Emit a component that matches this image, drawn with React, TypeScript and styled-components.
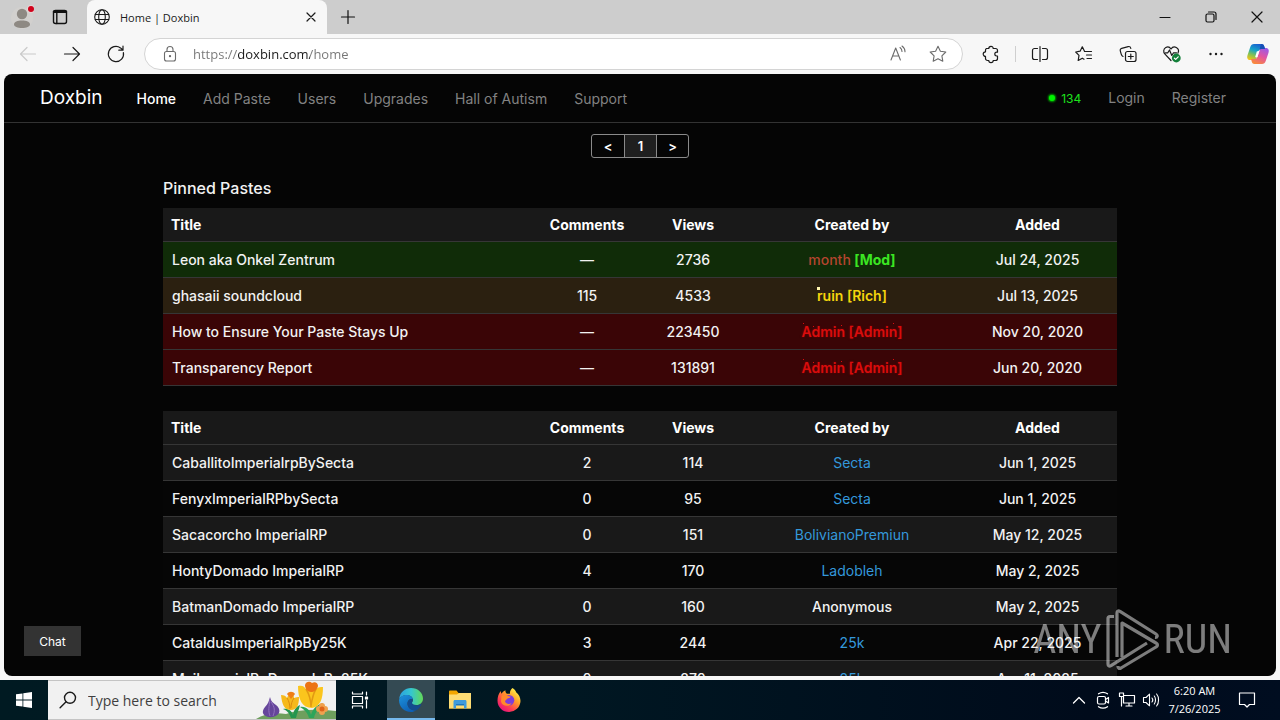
import React from "react";
import styled, { createGlobalStyle, css } from "styled-components";

const systemFont = `"Open Sans", "Noto Sans", sans-serif`;
const siteFont = `Inter, "Liberation Sans", sans-serif`;

const GlobalStyle = createGlobalStyle`
  * { box-sizing: border-box; }
  body { margin: 0; background: #f7f7f7; font-family: ${systemFont}; overflow: hidden; }
  button { border: 0; margin: 0; padding: 0; background: none; font: inherit; color: inherit; cursor: pointer; }
  a { color: inherit; text-decoration: none; }
  input { border: 0; outline: 0; margin: 0; padding: 0; background: none; font: inherit; }
  svg { display: block; flex: none; }
`;

const Desktop = styled.div`
  height: 100vh;
  display: flex;
  flex-direction: column;
`;

/* ---------- Browser chrome ---------- */

const TabStrip = styled.header`
  display: flex;
  align-items: stretch;
  height: 34px;
  flex: none;
  padding-right: 0;
  background: #cdcdcd;
`;

const StripButton = styled.button<{ $width: number }>`
  width: ${(p) => p.$width}px;
  display: flex;
  align-items: center;
  justify-content: center;
  color: #111;
`;

const Tab = styled.div`
  width: 240px;
  display: flex;
  align-items: center;
  gap: 10px;
  margin-left: 11px;
  padding: 0 8px 0 7px;
  background: #f7f7f7;
  border-radius: 8px 8px 0 0;
  color: #1b1b1b;
  font-size: 11px;
`;

const TabTitle = styled.span`
  flex: 1;
`;

const TabClose = styled.button`
  width: 16px;
  height: 16px;
  display: flex;
  align-items: center;
  justify-content: center;
`;

const Spacer = styled.div`
  flex: 1;
`;

const Toolbar = styled.div`
  display: flex;
  align-items: center;
  height: 40px;
  flex: none;
  padding: 0 2px 0 6px;
  background: #f7f7f7;
`;

const ToolButton = styled.button<{ $faded?: boolean; $narrow?: boolean }>`
  width: ${(p) => (p.$narrow ? 40 : 44)}px;
  height: 32px;
  flex: none;
  display: flex;
  align-items: center;
  justify-content: center;
  color: ${(p) => (p.$faded ? "#cacaca" : "#1b1b1b")};
`;

const AddressBar = styled.div`
  flex: 1;
  height: 32px;
  margin: 0 6px;
  display: flex;
  align-items: center;
  padding: 0 4px 0 15px;
  background: #fff;
  border: 1px solid #d4d4d4;
  border-radius: 16px;
  color: #6b6b6b;
`;

const AddressInput = styled.input`
  flex: 1;
  min-width: 0;
  height: 24px;
  margin-left: 13px;
  font-size: 13px;
  color: transparent;
  background: linear-gradient(90deg, #767676 0 45px, #1b1b1b 45px 117px, #767676 117px);
  background-clip: text;
  -webkit-background-clip: text;
`;

const AddressButton = styled.button`
  width: 40px;
  height: 28px;
  display: flex;
  align-items: center;
  justify-content: center;
`;

const ToolDivider = styled.div`
  width: 1px;
  height: 16px;
  margin: 0 2px;
  background: #cfcfcf;
`;

/* ---------- Site ---------- */

const Viewport = styled.div`
  position: relative;
  flex: 1;
  min-height: 0;
  overflow: hidden;
  margin: 0 4px 4px;
  border-radius: 8px;
  background: #050505;
  color: #f2f2f2;
  font-family: ${siteFont};
`;

const SiteNav = styled.nav`
  height: 49px;
  display: flex;
  align-items: center;
  padding: 0 50px 0 36px;
  border-bottom: 1px solid #333;
  font-size: 14px;
`;

const Brand = styled.a`
  margin-right: 34px;
  font-size: 19px;
  line-height: 24px;
  color: #fff;
`;

const NavLinks = styled.div<{ $lowered?: boolean }>`
  display: flex;
  gap: 27px;
  padding-top: ${(p) => (p.$lowered ? 2 : 0)}px;
`;

const NavLink = styled.a<{ $active?: boolean }>`
  line-height: 20px;
  color: ${(p) => (p.$active ? "#fff" : "#828282")};
  font-weight: ${(p) => (p.$active ? 500 : 400)};
`;

const Online = styled.span`
  display: flex;
  align-items: center;
  gap: 6px;
  font-size: 12px;
  color: #1de21d;
`;

const OnlineDot = styled.i`
  width: 6px;
  height: 6px;
  border-radius: 50%;
  background: #00f400;
  box-shadow: 0 0 2px 1px #00a000;
`;

const Content = styled.main`
  width: 75%;
  margin: 0 auto;
`;

const Pager = styled.div`
  display: flex;
  width: max-content;
  margin: 11px auto 0;
  border: 1px solid #8a8a8a;
  border-radius: 3px;
  overflow: hidden;
`;

const PageButton = styled.button<{ $current?: boolean }>`
  width: 32px;
  height: 22px;
  font-size: 13px;
  font-weight: 600;
  color: #fff;
  background: ${(p) => (p.$current ? "#1f1f1f" : "transparent")};
  & + & { border-left: 1px solid #8a8a8a; }
`;

const SectionTitle = styled.h2`
  margin: 18px 0 8px;
  font-size: 16px;
  line-height: 24px;
  font-weight: 500;
`;

const PasteTable = styled.table`
  width: 100%;
  table-layout: fixed;
  border-collapse: separate;
  border-spacing: 0;
  margin-bottom: 25px;
  font-size: 14px;
  line-height: 20px;
  font-weight: 500;
`;

const HeadCell = styled.th<{ $share?: string }>`
  width: ${(p) => p.$share ?? "auto"};
  height: 34px;
  padding: 0 8px;
  background: #191919;
  border-bottom: 1px solid #363636;
  font-weight: 700;
  color: #fff;
  text-align: center;
  &:first-child { text-align: left; }
`;

type Tone = "mod" | "rich" | "admin" | "odd" | "even";
const tones: Record<Tone, string> = {
  mod: "#102c08",
  rich: "#2b2010",
  admin: "#3a0506",
  odd: "#191919",
  even: "#060606",
};

const Row = styled.tr<{ $tone: Tone }>`
  background: ${(p) => tones[p.$tone]};
`;

const Cell = styled.td`
  height: 36px;
  padding: 0 9px;
  border-bottom: 1px solid #363636;
  text-align: center;
  white-space: nowrap;
  &:first-child { text-align: left; }
`;

type Rank = "mod" | "rich" | "admin" | "user" | "none";
const rankStyles = {
  mod: css`color: #b5452f;`,
  rich: css`color: #f4d50c; font-weight: 600;`,
  admin: css`color: #d90d0d; font-weight: 600; text-shadow: 0 0 2px #700;`,
  user: css`color: #3498db; font-weight: 400;`,
  none: css`color: #f2f2f2;`,
};

const Author = styled.span<{ $rank: Rank }>`
  position: relative;
  ${(p) => rankStyles[p.$rank]}
`;

const ModTag = styled.b`
  color: #3be622;
  font-weight: 700;
`;

const Sparkle = styled.i<{ $x: number; $y: number; $bright?: boolean }>`
  position: absolute;
  left: ${(p) => p.$x}px;
  top: ${(p) => p.$y}px;
  width: ${(p) => (p.$bright ? 3 : 1)}px;
  height: ${(p) => (p.$bright ? 3 : 1)}px;
  background: ${(p) => (p.$bright ? "#fff6b0" : "currentColor")};
`;

const ChatButton = styled.button`
  position: absolute;
  left: 20px;
  bottom: 20px;
  width: 57px;
  height: 30px;
  background: #333;
  color: #fff;
  font-size: 12px;
`;

const Watermark = styled.div`
  position: absolute;
  right: 44px;
  bottom: 2px;
  height: 68px;
  display: flex;
  align-items: center;
  gap: 3px;
  color: #fff;
  opacity: 0.48;
  font-family: "Liberation Sans Narrow", "Roboto Condensed", "Liberation Sans", sans-serif;
  font-size: 40px;
  line-height: 68px;
  pointer-events: none;
`;

/* ---------- Taskbar ---------- */

const Taskbar = styled.footer`
  height: 40px;
  flex: none;
  display: flex;
  align-items: stretch;
  padding-right: 12px;
  background: linear-gradient(90deg, #001a22, #001722 45%, #000b1b 85%, #000d20);
  color: #fff;
`;

const TaskButton = styled.button<{ $active?: boolean }>`
  width: 48px;
  margin-right: 1px;
  display: flex;
  align-items: center;
  justify-content: center;
  background: ${(p) => (p.$active ? "#344a53" : "none")};
  border-bottom: 2px solid ${(p) => (p.$active ? "#76b9ed" : "transparent")};
  border-top: 2px solid transparent;
`;

const TaskButtons = styled.div`
  display: flex;
  margin-left: 2px;
`;

const StartButton = styled.button`
  width: 48px;
  display: flex;
  align-items: center;
  justify-content: center;
`;

const SearchBox = styled.label`
  width: 288px;
  display: flex;
  align-items: center;
  padding-left: 11px;
  background: #f1f1f1;
  border-top: 1px solid #c4c4c4;
  border-bottom: 1px solid #c4c4c4;
  color: #1b1b1b;
`;

const SearchInput = styled.input`
  flex: 1;
  min-width: 0;
  margin-left: 11px;
  font-size: 14px;
  &::placeholder { color: #3f3f3f; opacity: 1; }
`;

const TrayButton = styled.button<{ $width: number }>`
  width: ${(p) => p.$width}px;
  display: flex;
  align-items: center;
  justify-content: center;
`;

const Clock = styled.button`
  width: 63px;
  font-size: 11px;
  line-height: 18px;
  text-align: center;
`;

/* ---------- Icons ---------- */

type IconProps = { size?: number; width?: number; children: React.ReactNode };
const Line = ({ size = 20, width = 1.1, children }: IconProps) => (
  <svg width={size} height={size} viewBox={`0 0 ${size} ${size}`} fill="none" stroke="currentColor"
    strokeWidth={width} strokeLinecap="round" strokeLinejoin="round" aria-hidden="true">
    {children}
  </svg>
);

const ProfileIcon = () => (
  <svg width="24" height="28" viewBox="0 0 24 28" aria-hidden="true">
    <circle cx="12" cy="15" r="11" fill="#d2d0ce" />
    <circle cx="12" cy="11" r="5.2" fill="#8e8983" />
    <path d="M4 21.5C4 19 7.5 17.6 12 17.6s8 1.400 8 3.900c0 2-3.500 3.500-8 3.500s-8-1.500-8-3.500Z" fill="#8e8983" />
    <circle cx="21" cy="6" r="4" fill="#e4d5d5" />
    <circle cx="21" cy="6" r="3" fill="#d0021b" />
  </svg>
);

const WorkspacesIcon = () => (
  <Line width={1.400}>
    <rect x="3.500" y="3.500" width="13" height="13" rx="2" />
    <path d="M4 4.800h12" strokeWidth="2.400" />
    <path d="M6.800 4v12.500" />
  </Line>
);

const GlobeIcon = () => (
  <Line size={16} width={1.100}>
    <circle cx="8" cy="8" r="7.300" />
    <ellipse cx="8" cy="8" rx="3.300" ry="7.300" />
    <path d="M1.300 5.500h13.400M1.300 10.500h13.400" />
  </Line>
);

const CloseIcon = () => (
  <Line size={16} width={1.200}><path d="m4 4 8 8M12 4l-8 8" /></Line>
);
const PlusIcon = () => (
  <Line width={1.200}><path d="M10 3.500v13M3.500 10h13" /></Line>
);
const MinimizeIcon = () => (
  <Line width={1.100}><path d="M5 10.500h10" /></Line>
);
const RestoreIcon = () => (
  <Line width={1.200}>
    <rect x="5" y="7" width="8" height="8" rx="1.500" />
    <path d="M7.500 5H13a2 2 0 0 1 2 2v5.500" />
  </Line>
);
const WindowCloseIcon = () => (
  <Line width={1.200}><path d="m5 5 10 10M15 5 5 15" /></Line>
);
const BackIcon = () => (
  <Line width={1.200}><path d="M17.500 10h-15M9 3.500 2.500 10 9 16.500" /></Line>
);
const ForwardIcon = () => (
  <Line width={1.200}><path d="M2.500 10h15M11 3.500l6.500 6.500L11 16.500" /></Line>
);
const ReloadIcon = () => (
  <Line width={1.200}><path d="M17.400 8.500A7.600 7.600 0 1 1 14.500 3.900L17 6M17 2v4.200h-4.200" /></Line>
);
const LockIcon = () => (
  <Line width={1.100}>
    <rect x="4.500" y="7.500" width="11" height="9.500" rx="2" />
    <path d="M7 7.500V5.500a3 3 0 0 1 6 0v2" />
    <circle cx="10" cy="12.200" r="0.600" fill="currentColor" />
  </Line>
);
const ReadAloudIcon = () => (
  <Line width={1.100}>
    <path d="m3 16 4.700-12L12.400 16M4.500 12h6.300M12 3.500c1.300 1 2 2.300 2 4M14 2c2 1.400 3 3.300 3 5.800" />
  </Line>
);
const StarIcon = () => (
  <Line width={1.100}>
    <path d="m10 2.300 2.400 4.900 5.400.8-3.900 3.800.9 5.400-4.800-2.500-4.800 2.500.9-5.400L2.200 8l5.400-.8L10 2.300Z" />
  </Line>
);
const PuzzleIcon = () => (
  <Line width={1.200}>
    <path d="M5.500 4.500h2.300a2.200 2.200 0 0 1 4.400 0h2.300a2 2 0 0 1 2 2v1.700h-.8a1.900 1.900 0 0 0 0 3.800h.8v2.500a2 2 0 0 1-2 2h-2.300a2.200 2.200 0 0 1-4.400 0H6.500a2 2 0 0 1-2-2V12.400a2.300 2.300 0 0 1 0-4.600V6.500a2 2 0 0 1 1-2Z" />
  </Line>
);
const SplitIcon = () => (
  <Line width={1.200}>
    <path d="M7.500 4.500H4.500a2 2 0 0 0-2 2v7a2 2 0 0 0 2 2h3M12.500 4.500h3a2 2 0 0 1 2 2v7a2 2 0 0 1-2 2h-3M10 2.500v15" />
  </Line>
);
const FavoritesIcon = () => (
  <Line width={1.200}>
    <path d="M10.500 7.200 8.300 2.800 6.100 7.200l-4.400.8 3.300 3.300-.8 5.200 4.100-2.300 1.700 1M10.500 7.500H17.500M12.500 11H17.500M13 14.500h4.500" />
  </Line>
);
const CollectionsIcon = () => (
  <Line width={1.200}>
    <rect x="7.500" y="7.500" width="10.500" height="10" rx="2" />
    <path d="M12.800 10v5M10.300 12.500h5M5 12.500c-1.200-.3-1.500-1.200-1.800-2.300l-.9-3.300c-.4-1.300.3-2.200 1.400-2.500l6.500-1.800c1.200-.3 2.200.2 2.600 1.700" />
  </Line>
);
const HeartIcon = () => (
  <Line width={1.200}>
    <path d="M9 16.500 3 10.200C1 8 1.400 4.800 3.800 3.500c2-1 4-.3 5.200 1.500 1.200-1.800 3.300-2.500 5.300-1.500 2.200 1.200 2.600 3.700 1.600 5.700M3.500 8.800h2.300L7.500 6l2.300 5.500 1.700-2.700h3" />
    <circle cx="14.300" cy="14" r="4.400" fill="#13803a" stroke="none" />
    <path d="m12.400 14.200 1.300 1.200 2.500-2.600" stroke="#fff" />
  </Line>
);
const DotsIcon = () => (
  <Line><g fill="currentColor" stroke="none"><circle cx="4.500" cy="10" r="1.200" /><circle cx="10" cy="10" r="1.200" /><circle cx="15.500" cy="10" r="1.200" /></g></Line>
);

const CopilotIcon = () => (
  <svg width="24" height="22" viewBox="0 0 24 22" aria-hidden="true">
    <defs>
      <linearGradient id="cpA" x1="0.600" y1="0" x2="0.200" y2="1">
        <stop offset="0" stopColor="#1a5fd0" /><stop offset="0.400" stopColor="#15a5c8" /><stop offset="0.700" stopColor="#86c252" /><stop offset="1" stopColor="#f4c318" />
      </linearGradient>
      <linearGradient id="cpB" x1="0.800" y1="0" x2="0.300" y2="1">
        <stop offset="0" stopColor="#9a5ae8" /><stop offset="0.500" stopColor="#e355a0" /><stop offset="1" stopColor="#f98a3c" />
      </linearGradient>
    </defs>
    <path d="M8 1h7.500c1.500 0 2.200.8 2.700 2.200l.9 2.800h-3.600c-1.700 0-2.600 1-3.100 2.500l-1.900 6c-.6 1.800-1.500 2.500-3.200 2.500H4.200C1.500 17 .7 14.800 1.500 12.200l2.700-8C5 2 6 1 8 1Z" fill="url(#cpA)" />
    <path d="M16 21H8.500c-1.500 0-2.200-.8-2.700-2.200L5 16h3.500c1.700 0 2.600-1 3.100-2.500l1.900-6C14.100 5.700 15 5 16.700 5h3.100c2.700 0 3.500 2.200 2.700 4.800l-2.700 8C19 20 18 21 16 21Z" fill="url(#cpB)" />
    <path d="M15 1h.5c1.500 0 2.200.8 2.700 2.200l.9 2.800h-3.600c-.8 0-1.500.3-2 .8Z" fill="#174fb5" />
    <path d="m10.800 8.500 2.600-.8-2 6.200-2.300.3Z" fill="#fff" />
  </svg>
);

const PlayMark = () => (
  <svg width="56" height="64" viewBox="0 0 56 64" fill="none" stroke="currentColor" strokeWidth="3.200" strokeLinejoin="round" aria-hidden="true">
    <path d="M9 8.500H5a2 2 0 0 0-2 2V56c0 2 1.200 2.700 3 1.700L42 35" />
    <path d="M12 49V5c0-2 1.200-2.700 3-1.700L51 26c2 1.300 1.500 3.500-1 3.300" />
    <path d="M17 49V15l34 20c2 1 2 3 0 4L16 60c-2 1-3 0-3-2" />
  </svg>
);

const WindowsIcon = () => (
  <svg width="16" height="16" viewBox="0 0 16 16" fill="#fff" aria-hidden="true">
    <path d="M0 2.300 6.500 1.400v6.200H0ZM7.300 1.300 16 0v7.600H7.300ZM0 8.400h6.500v6.200L0 13.700ZM7.300 8.400H16V16l-8.700-1.200Z" />
  </svg>
);
const SearchIcon = () => (
  <Line size={18} width={1.400}><circle cx="11" cy="6.800" r="5.500" /><path d="m7.100 10.700-6 6" /></Line>
);

const FlowersIcon = () => (
  <svg width="80" height="38" viewBox="0 0 80 38" aria-hidden="true">
    <path d="M0 38c8-5 18-7 30-5 14-5 32-5 50-3v8Z" fill="#6e9f5d" />
    <path d="M14 16c1 4 2 5 6 8 5 4 5 10-3 12-9 1-13-4-8-10 3-3 4-6 5-10Z" fill="#65459a" />
    <path d="M14 18c-1 8-2 12 0 17M15 21c4 5 4 9 2 14" stroke="#9071bd" fill="none" />
    <path d="M35 37c-2-6-5-8-8-9 5-1 9 2 10 6 1-6 4-9 7-10-1 5-3 8-4 13Z" fill="#24964f" />
    <path d="M53 37c-2-7-6-9-9-11 6-1 10 3 11 8 2-8 8-11 12-12-2 5-8 8-9 15Z" fill="#2ca55a" />
    <path d="M25 14c3 0 5 1 6 3 1-3 3-5 5-5 1 1 2 3 2 5 2-1 4-1 5-1 0 8-2 13-8 13-7 0-9-6-10-15Z" fill="#f6b91b" />
    <path d="M31 17c2 3 3 7 3 11M38 17c-2 3-3 6-3 10" stroke="#dc8b0e" fill="none" />
    <path d="M31 13c2-3 6-3 8 0l-4 5Z" fill="#ef7e15" />
    <path d="M42 5c4-1 6 0 8 3 1-4 3-6 5-6 3 0 5 3 5 6 2-2 5-2 7-2 0 12-3 20-11 21-10 0-14-9-14-22Z" fill="#fbc51d" />
    <path d="M50 8c3 5 5 11 5 18M60 8c-3 5-4 10-5 17" stroke="#e29a12" fill="none" strokeWidth="1.500" />
    <path d="M49 4c1-4 5-4 7-2 3-2 6 0 6 3-1 4-4 6-7 6s-6-3-6-7Z" fill="#ec7414" />
    <g fill="#f0a14f"><circle cx="63" cy="28" r="3" /><circle cx="69" cy="28" r="3" /><circle cx="66" cy="25" r="3" /><circle cx="66" cy="31" r="3" /></g>
    <circle cx="66" cy="28" r="2.500" fill="#e0641a" />
  </svg>
);

const TaskViewIcon = () => (
  <Line size={18} width={1.200}>
    <rect x="1.500" y="5.500" width="10" height="7" />
    <path d="M1.500 1v2h10V1M1.500 17v-2h10v2M15.500 1v3M15.500 9.500V17" />
    <path d="M14.500 6h2v2h-2z" fill="currentColor" />
  </Line>
);

const EdgeIcon = () => (
  <svg width="26" height="26" viewBox="0 0 26 26" aria-hidden="true">
    <defs>
      <linearGradient id="edT" x1="0" y1="0.500" x2="1" y2="0.500">
        <stop offset="0" stopColor="#2aa0e0" /><stop offset="0.500" stopColor="#35c6d0" /><stop offset="1" stopColor="#63d957" />
      </linearGradient>
      <linearGradient id="edB" x1="0" y1="0" x2="0.600" y2="1">
        <stop offset="0" stopColor="#1d92dc" /><stop offset="1" stopColor="#0e5fb4" />
      </linearGradient>
    </defs>
    <path d="M1.200 12C2 5 7 1 13 1c7 0 12 5 12 10.500 0 4-3 6.500-6.500 6.500-3 0-4.500-1-4.500-2 0-.8 1-1.200 1-3C15 10.500 12.500 8 9 8c-4 0-6.500 2-7.800 4Z" fill="url(#edT)" />
    <path d="M1 13C2 9.500 5 8 9 8c3.500 0 6 2.500 6 4.800 0-1.300-5.500-1.300-5.500 4 0 4.500 4.500 7 8.500 6.700-1.500.9-3 1.500-5 1.500C6 25 1 19.800 1 13Z" fill="url(#edB)" />
    <path d="M9.500 16.800c0-3.600 2.500-4.800 4.500-4.800 1 .5.500 2 0 3-.5 1.500 1 3.400 4.500 3.400 2.300 0 4-.8 5.200-1.900-1 3-3 5.500-5.700 7-4 .3-8.500-2.200-8.500-6.700Z" fill="#134b8e" />
  </svg>
);

const ExplorerIcon = () => (
  <svg width="22" height="20" viewBox="0 0 22 20" aria-hidden="true">
    <path d="M0 1.500C0 1 .5.500 1 .500h6.500L9.500 3H21c.6 0 1 .4 1 1v14.500H0Z" fill="#f2a600" />
    <path d="M0 4.500h8l2-1.500h12v15.500H0Z" fill="#fddc74" />
    <path d="M4.500 18.500v-7c0-.8.500-1.500 1.500-1.500h10c1 0 1.500.700 1.500 1.500v7H15V14H7v4.500Z" fill="#3e9bdc" />
    <path d="M7 14h8v1.500H7Z" fill="#1e77bd" />
  </svg>
);

const FirefoxIcon = () => (
  <svg width="24" height="24" viewBox="0 0 24 24" aria-hidden="true">
    <defs>
      <linearGradient id="ffA" x1="0.850" y1="0.100" x2="0.200" y2="0.950">
        <stop offset="0" stopColor="#fff04a" /><stop offset="0.350" stopColor="#ffa028" /><stop offset="0.700" stopColor="#ff4050" /><stop offset="1" stopColor="#e5127c" />
      </linearGradient>
    </defs>
    <path d="M15.500 0c2 1.200 3.200 2.600 3.800 4.600 2.400 1.800 4.200 5 4.200 8.400A11.400 11.400 0 0 1 12 24C5.600 24 .500 19 .500 12.700c0-3.800 1.200-7.200 3.300-9.700 0 1.200.2 2 .8 2.700C5.300 4.500 6.500 3 8.500 2.200c-.3 1.500.2 2.800 1.500 3.600h3C12.600 3.400 13.800 1.500 15.500 0Z" fill="url(#ffA)" />
    <circle cx="12" cy="12.300" r="5.300" fill="#7d3ddb" />
    <path d="M4.500 8c2-1.500 4.700-1.600 6.500 0l2.500.5c0 1.300-1.500 1.800-3 2-.8 1-2 1.300-2.500 3 .8 2.500 4.500 3.200 6.500 1.500-1 4-9.500 4-10.500-1.500Z" fill="#ff8a2b" />
  </svg>
);

const ChevronUpIcon = () => (
  <Line size={16} width={1.300}><path d="m2.500 11 5.500-5.500 5.500 5.500" /></Line>
);
const MeetIcon = () => (
  <Line size={18} width={1.200}>
    <rect x="3.500" y="5.500" width="8" height="7.500" rx="1.500" />
    <path d="m11.500 8.500 3-2v5.500l-3-2M4.500 2.800c3-2 6-2 9 0M4.500 15.700c3 2 6 2 9 0" />
  </Line>
);
const NetworkIcon = () => (
  <Line size={18} width={1.200}>
    <path d="M5.500 4.500h11v7.500h-11zM11 12v3M8 15h6M1.500 2h4v3.500h-4zM3.500 5.500V15" />
  </Line>
);
const VolumeIcon = () => (
  <Line size={18} width={1.100}>
    <path d="M1.500 6.500H4l3.500-3.300v11.600L4 11.500H1.500ZM10 7c.8 1 .8 3 0 4M12.300 5c1.600 2 1.600 6 0 8M14.600 3c2.600 3 2.600 9 0 12" />
  </Line>
);
const NotificationIcon = () => (
  <Line size={18} width={1.200}><path d="M1.500 2h15v11.500h-5L9 16l-2.500-2.500h-5Z" /></Line>
);

/* ---------- Data ---------- */

type Paste = { title: string; comments: string; views: string; author: string; rank: Rank; added: string; tone: Tone };

const pinned: Paste[] = [
  { title: "Leon aka Onkel Zentrum", comments: "—", views: "2736", author: "month", rank: "mod", added: "Jul 24, 2025", tone: "mod" },
  { title: "ghasaii soundcloud", comments: "115", views: "4533", author: "ruin [Rich]", rank: "rich", added: "Jul 13, 2025", tone: "rich" },
  { title: "How to Ensure Your Paste Stays Up", comments: "—", views: "223450", author: "Admin [Admin]", rank: "admin", added: "Nov 20, 2020", tone: "admin" },
  { title: "Transparency Report", comments: "—", views: "131891", author: "Admin [Admin]", rank: "admin", added: "Jun 20, 2020", tone: "admin" },
];

const recent: Paste[] = [
  { title: "CaballitoImperialrpBySecta", comments: "2", views: "114", author: "Secta", rank: "user", added: "Jun 1, 2025", tone: "odd" },
  { title: "FenyxImperialRPbySecta", comments: "0", views: "95", author: "Secta", rank: "user", added: "Jun 1, 2025", tone: "even" },
  { title: "Sacacorcho ImperialRP", comments: "0", views: "151", author: "BolivianoPremiun", rank: "user", added: "May 12, 2025", tone: "odd" },
  { title: "HontyDomado ImperialRP", comments: "4", views: "170", author: "Ladobleh", rank: "user", added: "May 2, 2025", tone: "even" },
  { title: "BatmanDomado ImperialRP", comments: "0", views: "160", author: "Anonymous", rank: "none", added: "May 2, 2025", tone: "odd" },
  { title: "CataldusImperialRpBy25K", comments: "3", views: "244", author: "25k", rank: "user", added: "Apr 22, 2025", tone: "even" },
  { title: "MaiImperialRpDomadoBy25K", comments: "0", views: "270", author: "25k", rank: "user", added: "Apr 11, 2025", tone: "odd" },
];

const AuthorName = ({ paste }: { paste: Paste }) => (
  <Author $rank={paste.rank}>
    {paste.rank === "none" ? paste.author : <a href="#user">{paste.author}</a>}
    {paste.rank === "mod" && <ModTag> [Mod]</ModTag>}
    {paste.rank === "rich" && <Sparkle $x={0} $y={0} $bright />}
    {paste.rank === "admin" && (
      <>
        <Sparkle $x={2} $y={0} />
        <Sparkle $x={12} $y={3} />
        <Sparkle $x={40} $y={2} />
        <Sparkle $x={92} $y={0} />
      </>
    )}
  </Author>
);

const Pastes = ({ rows }: { rows: Paste[] }) => (
  <PasteTable>
    <thead>
      <tr>
        <HeadCell scope="col">Title</HeadCell>
        <HeadCell scope="col" $share="11.11%">Comments</HeadCell>
        <HeadCell scope="col" $share="11.11%">Views</HeadCell>
        <HeadCell scope="col" $share="22.22%">Created by</HeadCell>
        <HeadCell scope="col" $share="16.67%">Added</HeadCell>
      </tr>
    </thead>
    <tbody>
      {rows.map((p) => (
        <Row key={p.title} $tone={p.tone}>
          <Cell><a href="#paste">{p.title}</a></Cell>
          <Cell>{p.comments}</Cell>
          <Cell>{p.views}</Cell>
          <Cell><AuthorName paste={p} /></Cell>
          <Cell>{p.added}</Cell>
        </Row>
      ))}
    </tbody>
  </PasteTable>
);

export default function App() {
  return (
    <Desktop>
      <GlobalStyle />
      <TabStrip>
        <StripButton $width={44} aria-label="Profile"><ProfileIcon /></StripButton>
        <StripButton $width={32} aria-label="Tab actions"><WorkspacesIcon /></StripButton>
        <Tab>
          <GlobeIcon />
          <TabTitle>Home | Doxbin</TabTitle>
          <TabClose aria-label="Close tab"><CloseIcon /></TabClose>
        </Tab>
        <StripButton $width={42} aria-label="New tab"><PlusIcon /></StripButton>
        <Spacer />
        <StripButton $width={46} aria-label="Minimize"><MinimizeIcon /></StripButton>
        <StripButton $width={46} aria-label="Restore"><RestoreIcon /></StripButton>
        <StripButton $width={46} aria-label="Close"><WindowCloseIcon /></StripButton>
      </TabStrip>
      <Toolbar>
        <ToolButton $faded aria-label="Back"><BackIcon /></ToolButton>
        <ToolButton aria-label="Forward"><ForwardIcon /></ToolButton>
        <ToolButton aria-label="Reload"><ReloadIcon /></ToolButton>
        <AddressBar>
          <LockIcon />
          <AddressInput aria-label="Address" defaultValue="https://doxbin.com/home" />
          <AddressButton aria-label="Read aloud"><ReadAloudIcon /></AddressButton>
          <AddressButton aria-label="Add to favorites"><StarIcon /></AddressButton>
        </AddressBar>
        <ToolButton aria-label="Extensions"><PuzzleIcon /></ToolButton>
        <ToolDivider />
        <ToolButton aria-label="Split screen"><SplitIcon /></ToolButton>
        <ToolButton aria-label="Favorites"><FavoritesIcon /></ToolButton>
        <ToolButton aria-label="Collections"><CollectionsIcon /></ToolButton>
        <ToolButton aria-label="Browser essentials"><HeartIcon /></ToolButton>
        <ToolButton aria-label="Settings and more"><DotsIcon /></ToolButton>
        <ToolButton $narrow aria-label="Copilot"><CopilotIcon /></ToolButton>
      </Toolbar>

      <Viewport>
        <SiteNav>
          <Brand href="#home">Doxbin</Brand>
          <NavLinks $lowered>
            <NavLink href="#home" $active>Home</NavLink>
            <NavLink href="#add">Add Paste</NavLink>
            <NavLink href="#users">Users</NavLink>
            <NavLink href="#upgrades">Upgrades</NavLink>
            <NavLink href="#hall">Hall of Autism</NavLink>
            <NavLink href="#support">Support</NavLink>
          </NavLinks>
          <Spacer />
          <NavLinks>
            <Online><OnlineDot />134</Online>
            <NavLink href="#login">Login</NavLink>
            <NavLink href="#register">Register</NavLink>
          </NavLinks>
        </SiteNav>
        <Content>
          <Pager>
            <PageButton>&lt;</PageButton>
            <PageButton $current>1</PageButton>
            <PageButton>&gt;</PageButton>
          </Pager>
          <SectionTitle>Pinned Pastes</SectionTitle>
          <Pastes rows={pinned} />
          <Pastes rows={recent} />
        </Content>
        <ChatButton>Chat</ChatButton>
        <Watermark><span>ANY</span><PlayMark /><span>RUN</span></Watermark>
      </Viewport>

      <Taskbar>
        <StartButton aria-label="Start"><WindowsIcon /></StartButton>
        <SearchBox>
          <SearchIcon />
          <SearchInput placeholder="Type here to search" aria-label="Type here to search" />
          <FlowersIcon />
        </SearchBox>
        <TaskButton aria-label="Task view"><TaskViewIcon /></TaskButton>
        <TaskButtons>
          <TaskButton $active aria-label="Microsoft Edge"><EdgeIcon /></TaskButton>
          <TaskButton aria-label="File Explorer"><ExplorerIcon /></TaskButton>
          <TaskButton aria-label="Firefox"><FirefoxIcon /></TaskButton>
        </TaskButtons>
        <Spacer />
        <TrayButton $width={24} aria-label="Show hidden icons"><ChevronUpIcon /></TrayButton>
        <TrayButton $width={24} aria-label="Meet Now"><MeetIcon /></TrayButton>
        <TrayButton $width={24} aria-label="Network"><NetworkIcon /></TrayButton>
        <TrayButton $width={24} aria-label="Volume"><VolumeIcon /></TrayButton>
        <Clock>6:20 AM<br />7/26/2025</Clock>
        <TrayButton $width={42} aria-label="Notifications"><NotificationIcon /></TrayButton>
      </Taskbar>
    </Desktop>
  );
}
